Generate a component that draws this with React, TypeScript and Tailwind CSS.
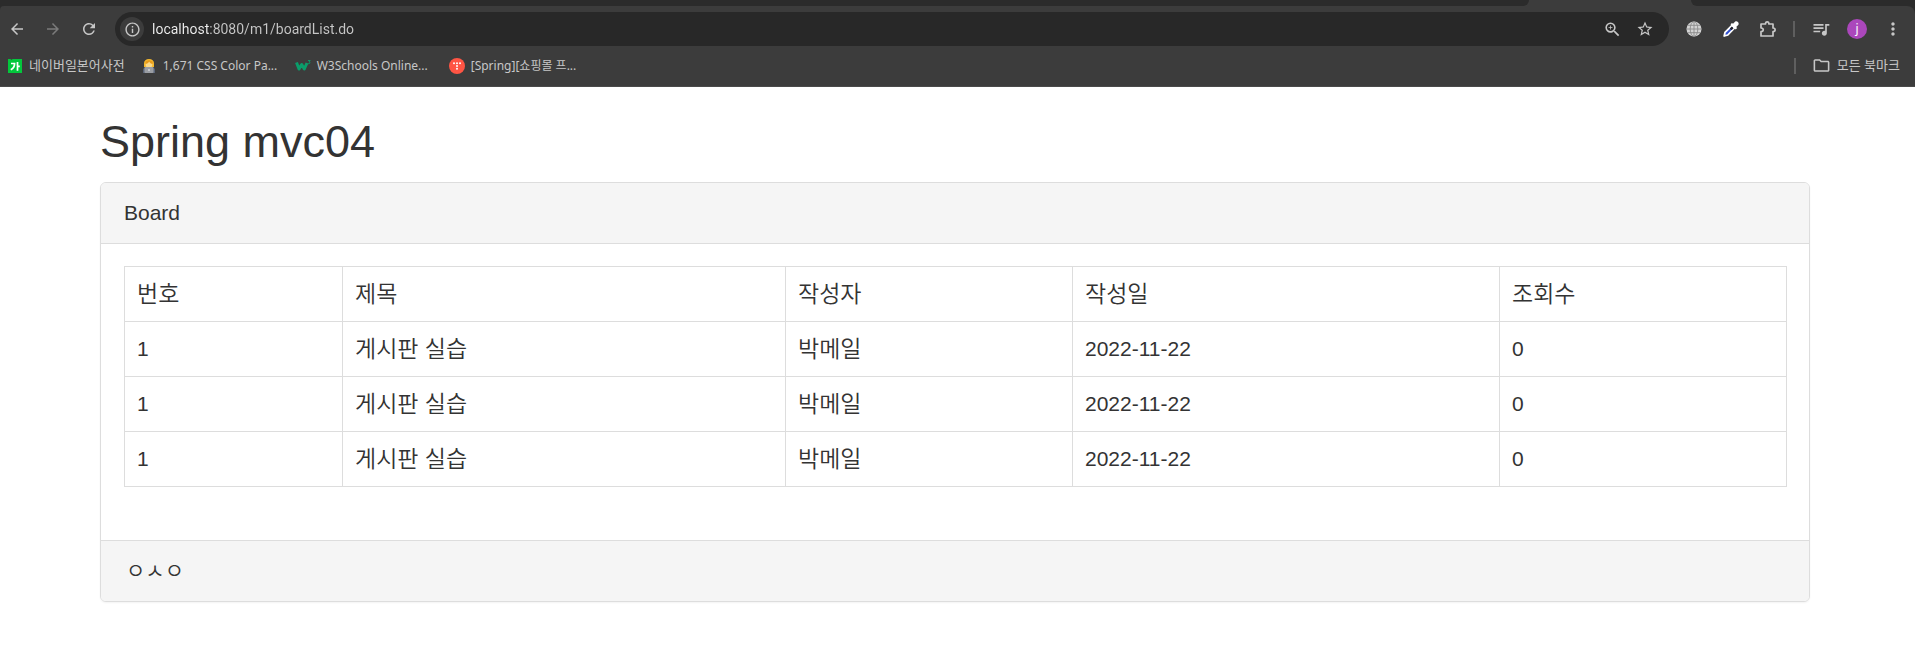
import type { ReactNode } from "react";
import {
    MdArrowBack,
    MdArrowForward,
    MdInfoOutline,
    MdMoreVert,
    MdOutlineFolder,
    MdQueueMusic,
    MdRefresh,
    MdStarBorder,
    MdZoomIn,
} from "react-icons/md";

const DictionaryIcon = () => (
    <svg width="16" height="16" viewBox="0 0 16 16">
        <path d="M1 1h2.500l1 1 1-1H15v14H1z" fill="#03c73c" />
        <g fill="none" stroke="#fff" strokeWidth="1.700">
            <path d="M4 5.500h3.600c0 3-1.300 5-3.800 6.300" />
            <path d="M10.500 4v8.800M10.500 8.300h2.300" />
        </g>
    </svg>
);

const PersonIcon = () => (
    <svg width="16" height="16" viewBox="0 0 16 16">
        <path
            d="M3 9V5.500C3 2.500 5 1 8 1s5 1.500 5 4.500V9z"
            fill="#f5b82e"
        />
        <circle cx="8" cy="6.500" r="3.300" fill="#fbd98a" />
        <path d="M4.500 6C6 5.800 7.500 5 8.200 3.500 9 5 10 5.800 11.600 6V3.500L8 2 4.500 3.500z" fill="#e89b1c" />
        <path d="M2 15v-3c0-1.500 1-2.500 2.500-2.500h7c1.500 0 2.500 1 2.500 2.500v3z" fill="#5a6478" />
        <rect x="3.500" y="9" width="9" height="6" rx="0.800" fill="#9a9da3" />
        <circle cx="8" cy="12" r="0.900" fill="#d8dade" />
    </svg>
);

const SchoolsIcon = () => (
    <svg width="16" height="16" viewBox="0 0 16 16">
        <path
            d="M1.500 4.500l2.500 6.500 2.700-4.500 2.600 4.500 2.700-6"
            fill="none"
            stroke="#0a9d6a"
            strokeWidth="3"
            strokeLinejoin="round"
        />
        <path
            d="M13 2.500h2.200L14 4c1.500 0 1.500 2-.9 1.700"
            fill="none"
            stroke="#0a9d6a"
            strokeWidth="0.900"
        />
    </svg>
);

const TistoryIcon = () => (
    <svg width="16" height="16" viewBox="0 0 16 16">
        <circle cx="8" cy="8" r="8" fill="#ff5544" />
        <g fill="#fff">
            <circle cx="5" cy="5.200" r="1" />
            <circle cx="8" cy="5.200" r="1" />
            <circle cx="11" cy="5.200" r="1" />
            <circle cx="8" cy="8" r="1" />
            <circle cx="8" cy="10.800" r="1" />
        </g>
    </svg>
);

const GlobeIcon = () => (
    <svg width="16" height="16" viewBox="0 0 16 16">
        <circle cx="8" cy="8" r="7.500" fill="#d3d3d3" />
        <g fill="none" stroke="#8a8a8a" strokeWidth="0.900">
            <path d="M8 .5v15M.5 8h15M1.800 4.300h12.400M1.800 11.700h12.400" />
            <ellipse cx="8" cy="8" rx="3.800" ry="7.500" />
        </g>
    </svg>
);

const EyedropperIcon = () => (
    <svg width="16" height="16" viewBox="0 0 16 16">
        <path
            d="M9 4.500l2.500 2.500-6.700 7-3.600 1 .8-3.600z"
            fill="#2f4fd0"
            stroke="#fff"
            strokeWidth="1.800"
            strokeLinejoin="round"
        />
        <path d="M8.800 5.500l1.700 1.700-2 2L6.800 7.500z" fill="#26262e" />
        <path
            d="M7.500 3.200l1.500-1.300 1 .9L12 .8c1.900-1.600 4.800 1.200 3.200 3.200l-2 2 .9 1-1.400 1.500z"
            fill="#fff"
        />
    </svg>
);

const PuzzleIcon = () => (
    <svg width="18" height="18" viewBox="0 0 18 18">
        <path
            d="M2 4h4.500C6.500 1.200 9.900 1.200 9.900 4H14v4c2.800 0 2.800 3.500 0 3.500V16H2v-4.300c3-.2 3-3.500 0-3.700z"
            fill="none"
            stroke="#c7c7c7"
            strokeWidth="1.700"
            strokeLinejoin="round"
        />
    </svg>
);

type Bookmark = {
    title: string;
    icon: ReactNode;
    className: string;
};

const bookmarks: Bookmark[] = [
    {
        title: "네이버일본어사전",
        icon: <DictionaryIcon />,
        className: "text-[13px]",
    },
    {
        title: "1,671 CSS Color Pa...",
        icon: <PersonIcon />,
        className: "w-[138px] text-xs",
    },
    {
        title: "W3Schools Online...",
        icon: <SchoolsIcon />,
        className: "w-[138px] text-xs",
    },
    {
        title: "[Spring][쇼핑몰 프...",
        icon: <TistoryIcon />,
        className: "w-[138px] text-xs",
    },
];

const posts = [
    { id: 1, no: 1, title: "게시판 실습", writer: "박메일", date: "2022-11-22", count: 0 },
    { id: 2, no: 1, title: "게시판 실습", writer: "박메일", date: "2022-11-22", count: 0 },
    { id: 3, no: 1, title: "게시판 실습", writer: "박메일", date: "2022-11-22", count: 0 },
];

const TabStrip = () => (
    <div className="flex h-[6px] bg-[#3c3c3c]">
        <div className="flex-1 rounded-br-md bg-[#2b2b2b]" />
        <div className="w-[162px]" />
        <div className="w-[224px] rounded-bl-md bg-[#2b2b2b]" />
    </div>
);

const Toolbar = () => (
    <div className="flex h-[46px] items-center pr-3 pl-2 text-[#c7c7c7]">
        <button type="button" aria-label="Back">
            <MdArrowBack size={18} />
        </button>
        <button type="button" aria-label="Forward" className="ml-[18px] text-[#7b7b7b]">
            <MdArrowForward size={18} />
        </button>
        <button type="button" aria-label="Reload" className="ml-[18px]">
            <MdRefresh size={18} />
        </button>

        <div className="ml-[17px] flex h-[34px] flex-1 items-center rounded-full bg-[#282828] pr-[15px] pl-[5px]">
            <button
                type="button"
                aria-label="Site information"
                className="flex size-6 items-center justify-center rounded-full bg-[#3c3c3c]"
            >
                <MdInfoOutline size={17} />
            </button>
            <input
                type="text"
                aria-label="Address"
                defaultValue="localhost:8080/m1/boardList.do"
                className="ml-2 min-w-0 flex-1 bg-linear-to-r from-[#f0f0f0] from-[58px] to-[#c7c7c7] to-[58px] bg-clip-text font-['Roboto',sans-serif] text-sm text-transparent outline-none"
            />
            <button type="button" aria-label="Zoom">
                <MdZoomIn size={19} />
            </button>
            <button type="button" aria-label="Bookmark this page" className="ml-[14px]">
                <MdStarBorder size={18} />
            </button>
        </div>

        <button type="button" aria-label="Translate" className="ml-[17px]">
            <GlobeIcon />
        </button>
        <button type="button" aria-label="Color picker" className="ml-[21px]">
            <EyedropperIcon />
        </button>
        <button type="button" aria-label="Extensions" className="ml-5">
            <PuzzleIcon />
        </button>
        <div className="ml-4 h-4 w-[2px] bg-[#5f5f5f]" />
        <button type="button" aria-label="Media" className="ml-4">
            <MdQueueMusic size={20} />
        </button>
        <button
            type="button"
            aria-label="Profile"
            className="ml-4 flex size-5 items-center justify-center rounded-full bg-[#ab47bc] text-xs text-white"
        >
            j
        </button>
        <button type="button" aria-label="Menu" className="ml-4">
            <MdMoreVert size={20} />
        </button>
    </div>
);

const BookmarkBar = () => (
    <div className="flex h-[35px] items-start border-b border-[#4a4a4a] pr-[15px] pl-[7px] text-[#c7c7c7]">
        <div className="flex h-[27px] flex-1 items-center gap-4">
            {bookmarks.map(({ title, icon, className }) => (
                <a
                    key={title}
                    href="#"
                    className={`flex items-center gap-[6px] whitespace-nowrap ${className}`}
                >
                    {icon}
                    {title}
                </a>
            ))}
        </div>
        <div className="flex h-[27px] items-center">
            <div className="h-4 w-[2px] bg-[#5f5f5f]" />
            <a href="#" className="ml-4 flex items-center gap-[6px] text-[13px]">
                <MdOutlineFolder size={19} />
                모든 북마크
            </a>
        </div>
    </div>
);

const Board = () => (
    <main className="pt-[30px] pr-[105px] pl-[100px] font-['Liberation_Sans','Noto_Sans_CJK_KR',sans-serif] text-[21px] leading-[30px] text-[#333]">
        <h2 className="mb-[15px] text-[45px] leading-[50px]">Spring mvc04</h2>
        <section className="overflow-hidden rounded-md border border-[#ddd] bg-white shadow-xs">
            <div className="border-b border-[#ddd] bg-[#f5f5f5] px-[23px] py-[15px]">
                Board
            </div>
            <div className="pt-[22px] pr-[22px] pb-[53px] pl-[23px]">
                <table className="w-full table-fixed border-collapse [&_td]:border [&_td]:border-[#ddd] [&_td]:p-3 [&_th]:border [&_th]:border-[#ddd] [&_th]:p-3">
                    <thead>
                        <tr className="text-left text-[23px]">
                            <th className="w-[218px] font-[350]">번호</th>
                            <th className="w-[443px] font-[350]">제목</th>
                            <th className="w-[287px] font-[350]">작성자</th>
                            <th className="w-[427px] font-[350]">작성일</th>
                            <th className="w-[287px] font-[350]">조회수</th>
                        </tr>
                    </thead>
                    <tbody>
                        {posts.map((post) => (
                            <tr key={post.id}>
                                <td>{post.no}</td>
                                <td className="text-[23px] font-[350]">{post.title}</td>
                                <td className="text-[23px] font-[350]">{post.writer}</td>
                                <td>{post.date}</td>
                                <td>{post.count}</td>
                            </tr>
                        ))}
                    </tbody>
                </table>
            </div>
            <div className="border-t border-[#ddd] bg-[#f5f5f5] px-[25px] py-[15px] font-[350]">
                ㅇㅅㅇ
            </div>
        </section>
    </main>
);

export default function App() {
    return (
        <div className="min-h-screen bg-white font-['Noto_Sans','Noto_Sans_CJK_KR',sans-serif]">
            <header className="bg-[#2b2b2b]">
                <TabStrip />
                <div className="rounded-tl-sm rounded-tr-lg bg-[#3c3c3c]">
                    <Toolbar />
                    <BookmarkBar />
                </div>
            </header>
            <Board />
        </div>
    );
}
